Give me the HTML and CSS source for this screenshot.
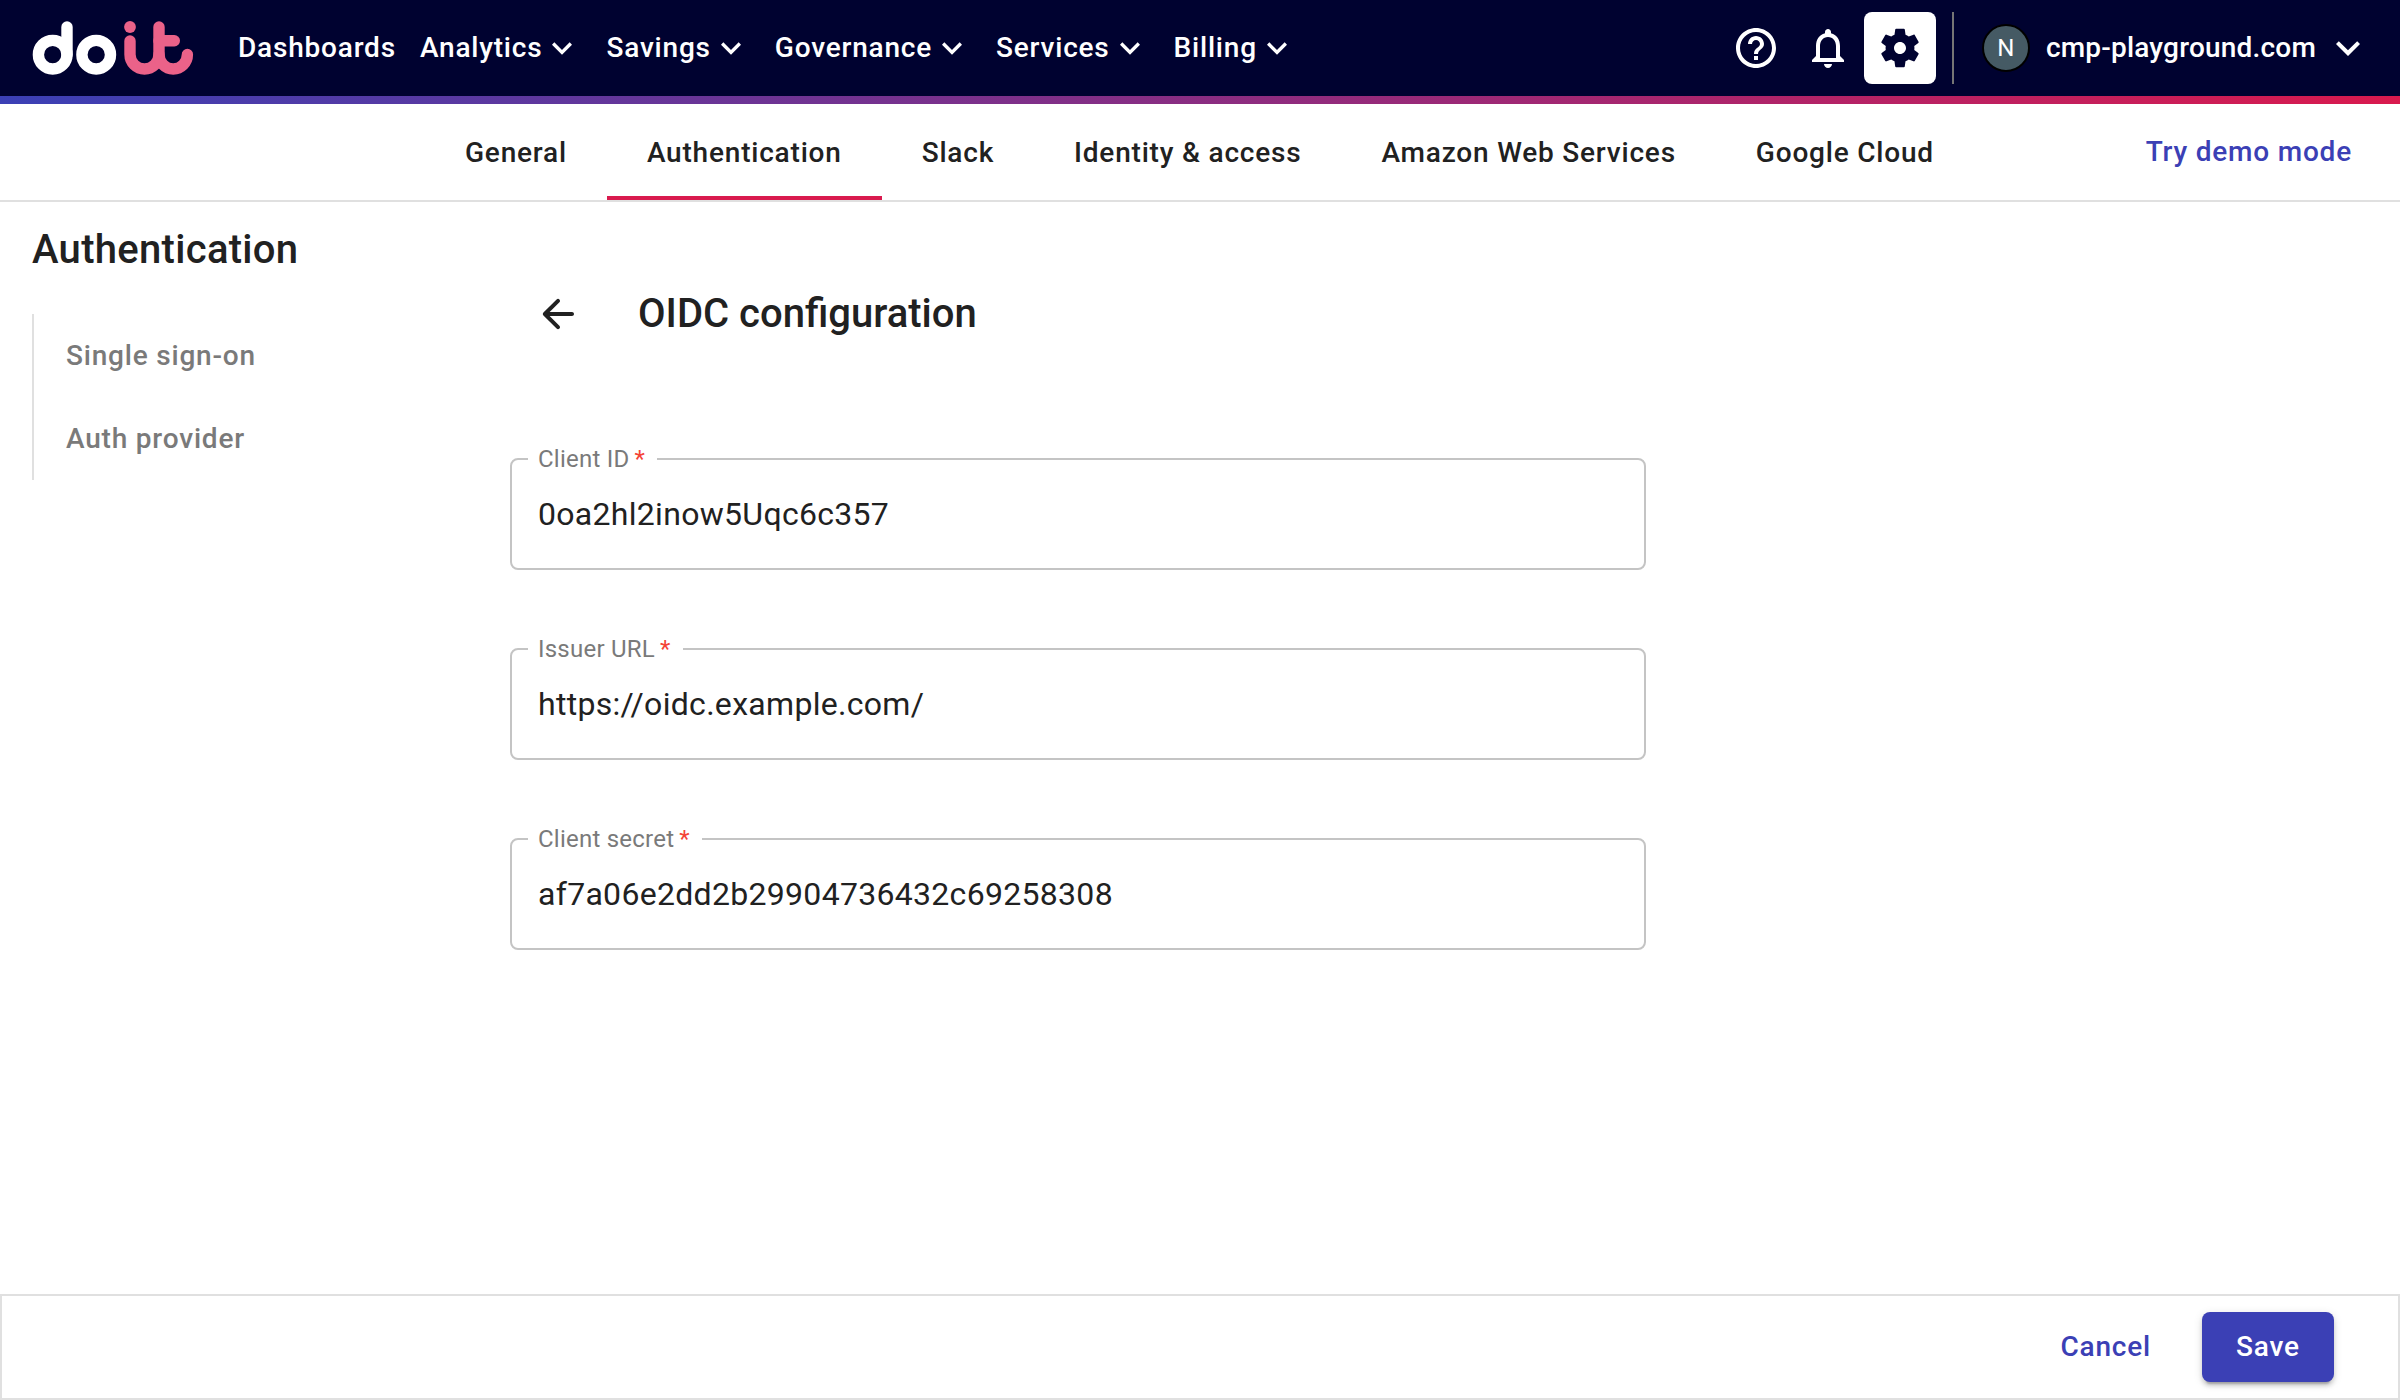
FILE: index.html
```html
<!DOCTYPE html>
<html lang="en">
<head>
<meta charset="utf-8">
<title>OIDC configuration</title>
<link rel="stylesheet" href="styles.css">
</head>
<body>
<header class="topbar">
  <svg class="logo" viewBox="32 20 162 56" fill="none" stroke-linecap="round" aria-label="doit">
    <g stroke="#fff" stroke-width="11.4">
      <circle cx="52.7" cy="54.7" r="14.3"/>
      <path d="M67 27v27.7"/>
      <circle cx="96.2" cy="54.7" r="14.3"/>
    </g>
    <g stroke="#eb6289" stroke-width="11.4" stroke-linejoin="round">
      <path d="M130 41v13.5a14.5 14.5 0 0 0 29 0V27"/>
      <path d="M159 54.5a14.200 14.500 0 0 0 28.400 0"/>
      <path d="M159 40.8h15.3"/>
    </g>
    <circle cx="130" cy="27" r="5.9" fill="#eb6289"/>
  </svg>
  <nav class="menu">
    <a class="menu-item">Dashboards</a>
    <a class="menu-item">Analytics<svg class="caret" viewBox="0 0 24 24"><path d="M7.41 8.59 12 13.17l4.59-4.58L18 10l-6 6-6-6z"/></svg></a>
    <a class="menu-item">Savings<svg class="caret" viewBox="0 0 24 24"><path d="M7.41 8.59 12 13.17l4.59-4.58L18 10l-6 6-6-6z"/></svg></a>
    <a class="menu-item">Governance<svg class="caret" viewBox="0 0 24 24"><path d="M7.41 8.59 12 13.17l4.59-4.58L18 10l-6 6-6-6z"/></svg></a>
    <a class="menu-item">Services<svg class="caret" viewBox="0 0 24 24"><path d="M7.41 8.59 12 13.17l4.59-4.58L18 10l-6 6-6-6z"/></svg></a>
    <a class="menu-item">Billing<svg class="caret" viewBox="0 0 24 24"><path d="M7.41 8.59 12 13.17l4.59-4.58L18 10l-6 6-6-6z"/></svg></a>
  </nav>
  <div class="tools">
    <span class="tool"><svg viewBox="0 0 24 24"><path d="M11 18h2v-2h-2v2zm1-16C6.480 2 2 6.480 2 12s4.480 10 10 10 10-4.480 10-10S17.520 2 12 2zm0 18c-4.410 0-8-3.590-8-8s3.590-8 8-8 8 3.590 8 8-3.590 8-8 8zm0-14c-2.210 0-4 1.790-4 4h2c0-1.100.9-2 2-2s2 .9 2 2c0 2-3 1.750-3 5h2c0-2.250 3-2.500 3-5 0-2.210-1.790-4-4-4z"/></svg></span>
    <span class="tool"><svg viewBox="0 0 24 24"><path d="M12 22c1.100 0 2-.9 2-2h-4c0 1.100.9 2 2 2zm6-6v-5c0-3.070-1.630-5.640-4.500-6.320V4c0-.83-.67-1.500-1.500-1.500s-1.500.67-1.500 1.500v.68C7.640 5.360 6 7.920 6 11v5l-2 2v1h16v-1l-2-2zm-2 1H8v-6c0-2.480 1.510-4.500 4-4.500s4 2.020 4 4.500v6z"/></svg></span>
    <span class="tool tool-active"><svg viewBox="0 0 24 24"><path d="M19.140 12.940c.04-.3.06-.61.06-.94 0-.32-.02-.64-.07-.94l2.030-1.580c.18-.14.23-.41.12-.61l-1.920-3.320c-.12-.22-.37-.29-.59-.22l-2.390.96c-.5-.38-1.030-.7-1.620-.94l-.36-2.540c-.04-.24-.24-.41-.48-.41h-3.840c-.24 0-.43.17-.47.41l-.36 2.540c-.59.24-1.130.57-1.620.94l-2.390-.96c-.22-.08-.47 0-.59.22L2.740 8.870c-.12.21-.08.47.12.61l2.030 1.580c-.05.3-.09.63-.09.94s.02.64.07.94l-2.030 1.580c-.18.14-.23.41-.12.61l1.920 3.320c.12.22.37.29.59.22l2.390-.96c.5.38 1.030.7 1.620.94l.36 2.540c.05.24.24.41.48.41h3.840c.24 0 .44-.17.47-.41l.36-2.540c.59-.24 1.130-.56 1.620-.94l2.390.96c.22.08.47 0 .59-.22l1.920-3.320c.12-.22.07-.47-.12-.61l-2.010-1.580zM12 15c-1.650 0-3-1.350-3-3s1.350-3 3-3 3 1.350 3 3-1.350 3-3 3z"/></svg></span>
    <span class="divider"></span>
    <span class="avatar">N</span>
    <span class="account">cmp-playground.com</span>
    <svg class="account-caret" viewBox="0 0 24 24"><path d="M7.41 8.59 12 13.17l4.59-4.58L18 10l-6 6-6-6z"/></svg>
  </div>
</header>
<div class="stripe"></div>
<div class="tabbar">
  <nav class="tabs">
    <a class="tab">General</a>
    <a class="tab tab-active">Authentication</a>
    <a class="tab">Slack</a>
    <a class="tab">Identity &amp; access</a>
    <a class="tab">Amazon Web Services</a>
    <a class="tab">Google Cloud</a>
  </nav>
  <a class="demo">Try demo mode</a>
</div>
<main class="page">
  <aside class="sidebar">
    <h1 class="title">Authentication</h1>
    <nav class="side-nav">
      <a class="side-link">Single sign-on</a>
      <a class="side-link">Auth provider</a>
    </nav>
  </aside>
  <section class="content">
    <div class="heading">
      <svg class="back" viewBox="0 0 24 24"><path d="M19 11H7.830l4.880-4.880c.39-.39.39-1.030 0-1.420-.39-.39-1.020-.39-1.410 0l-6.590 6.590c-.39.39-.39 1.020 0 1.410l6.590 6.590c.39.39 1.020.39 1.410 0 .39-.39.39-1.020 0-1.410L7.830 13H19c.55 0 1-.45 1-1s-.45-1-1-1z"/></svg>
      <h2 class="title">OIDC configuration</h2>
    </div>
    <form class="form">
      <fieldset class="field"><legend class="label">Client ID<span class="required">&#8201;*</span></legend><div class="value">0oa2hl2inow5Uqc6c357</div></fieldset>
      <fieldset class="field"><legend class="label">Issuer URL<span class="required">&#8201;*</span></legend><div class="value">https://oidc.example.com/</div></fieldset>
      <fieldset class="field"><legend class="label">Client secret<span class="required">&#8201;*</span></legend><div class="value">af7a06e2dd2b29904736432c69258308</div></fieldset>
    </form>
  </section>
</main>
<footer class="actions">
  <a class="cancel">Cancel</a>
  <a class="save">Save</a>
</footer>
</body>
</html>
```
FILE: styles.css
```css
* { box-sizing: border-box; }
body {
  margin: 0;
  height: 1400px;
  display: flex;
  flex-direction: column;
  overflow: hidden;
  background: #fff;
  color: #212121;
  font-family: Roboto, sans-serif;
  font-size: 28px;
  font-weight: 500;
  line-height: 32px;
  letter-spacing: 0.8px;
  white-space: nowrap;
}
svg { display: block; flex: none; fill: currentColor; }
.topbar {
  height: 96px;
  flex: none;
  display: flex;
  align-items: center;
  background: #000230;
  color: #fff;
}
.logo { width: 162px; height: 56px; margin-left: 32px; fill: none; }
.menu { display: flex; gap: 24px; margin-left: 44px; }
.menu-item { display: flex; align-items: center; }
.caret { width: 40px; height: 40px; margin: -4px 0; }
.tools { display: flex; align-items: center; margin-left: auto; }
.tool {
  width: 72px;
  height: 72px;
  display: grid;
  place-items: center;
}
.tool svg { width: 48px; height: 48px; }
.tool-active { background: #fff; color: #000230; border-radius: 8px; }
.divider { width: 2px; height: 72px; margin: 0 28px 0 16px; background: #757575; }
.avatar {
  width: 48px;
  height: 48px;
  border: 2px solid #000;
  border-radius: 50%;
  background: #455a64;
  display: grid;
  place-items: center;
  font-size: 24px;
  font-weight: 400;
  letter-spacing: 0;
}
.account { margin-left: 16px; letter-spacing: 0.2px; }
.account-caret { width: 48px; height: 48px; margin: 0 28px 0 8px; }
.stripe { height: 8px; flex: none; background: linear-gradient(90deg, #3b40b5, #d91a4e); }
.tabbar {
  height: 98px;
  flex: none;
  display: flex;
  border-bottom: 2px solid #e0e0e0;
}
.tabs { display: flex; margin-left: 425px; }
.tab { padding: 33px 40px 0; }
.tab-active { border-bottom: 4px solid #d91a4e; }
.demo { margin: 32px 48px 0 auto; color: #3b40b5; }
.page { flex: 1; display: flex; }
.title {
  margin: 0;
  font-size: 40px;
  line-height: 48px;
  font-weight: 500;
  letter-spacing: 0;
}
.sidebar { width: 510px; padding: 24px 0 0 32px; }
.sidebar .title { letter-spacing: 0.3px; }
.side-nav {
  display: flex;
  flex-direction: column;
  height: 166px;
  margin-top: 40px;
  padding: 26px 0 0 32px;
  gap: 51px;
  border-left: 2px solid #e0e0e0;
  color: #7a7a7a;
}
.content { width: 1136px; padding-top: 88px; }
.heading { display: flex; align-items: center; gap: 56px; padding-left: 24px; }
.back { width: 48px; height: 48px; }
.form { display: flex; flex-direction: column; gap: 67px; margin-top: 109px; }
.field {
  height: 123px;
  margin: 0;
  padding: 0 26px;
  border: 2px solid #c4c4c4;
  border-radius: 8px;
  font-weight: 400;
}
.label {
  height: 24px;
  margin-left: -10px;
  padding: 0 12px 0 10px;
  font-size: 24px;
  line-height: 24px;
  letter-spacing: 0.23px;
  color: #7a7a7a;
}
.required { color: #f44336; }
.value { padding-top: 24px; font-size: 32px; line-height: 38px; letter-spacing: 0.3px; }
.actions {
  height: 106px;
  flex: none;
  display: flex;
  align-items: center;
  justify-content: flex-end;
  gap: 51px;
  padding-right: 64px;
  border: 2px solid #e0e0e0;
}
.cancel { color: #3b40b5; }
.save {
  width: 132px;
  height: 70px;
  border-radius: 8px;
  background: #3b40b5;
  color: #fff;
  display: grid;
  place-items: center;
  box-shadow: 0 6px 2px -4px rgba(0,0,0,.2), 0 4px 4px rgba(0,0,0,.14), 0 2px 10px rgba(0,0,0,.12);
}
```
